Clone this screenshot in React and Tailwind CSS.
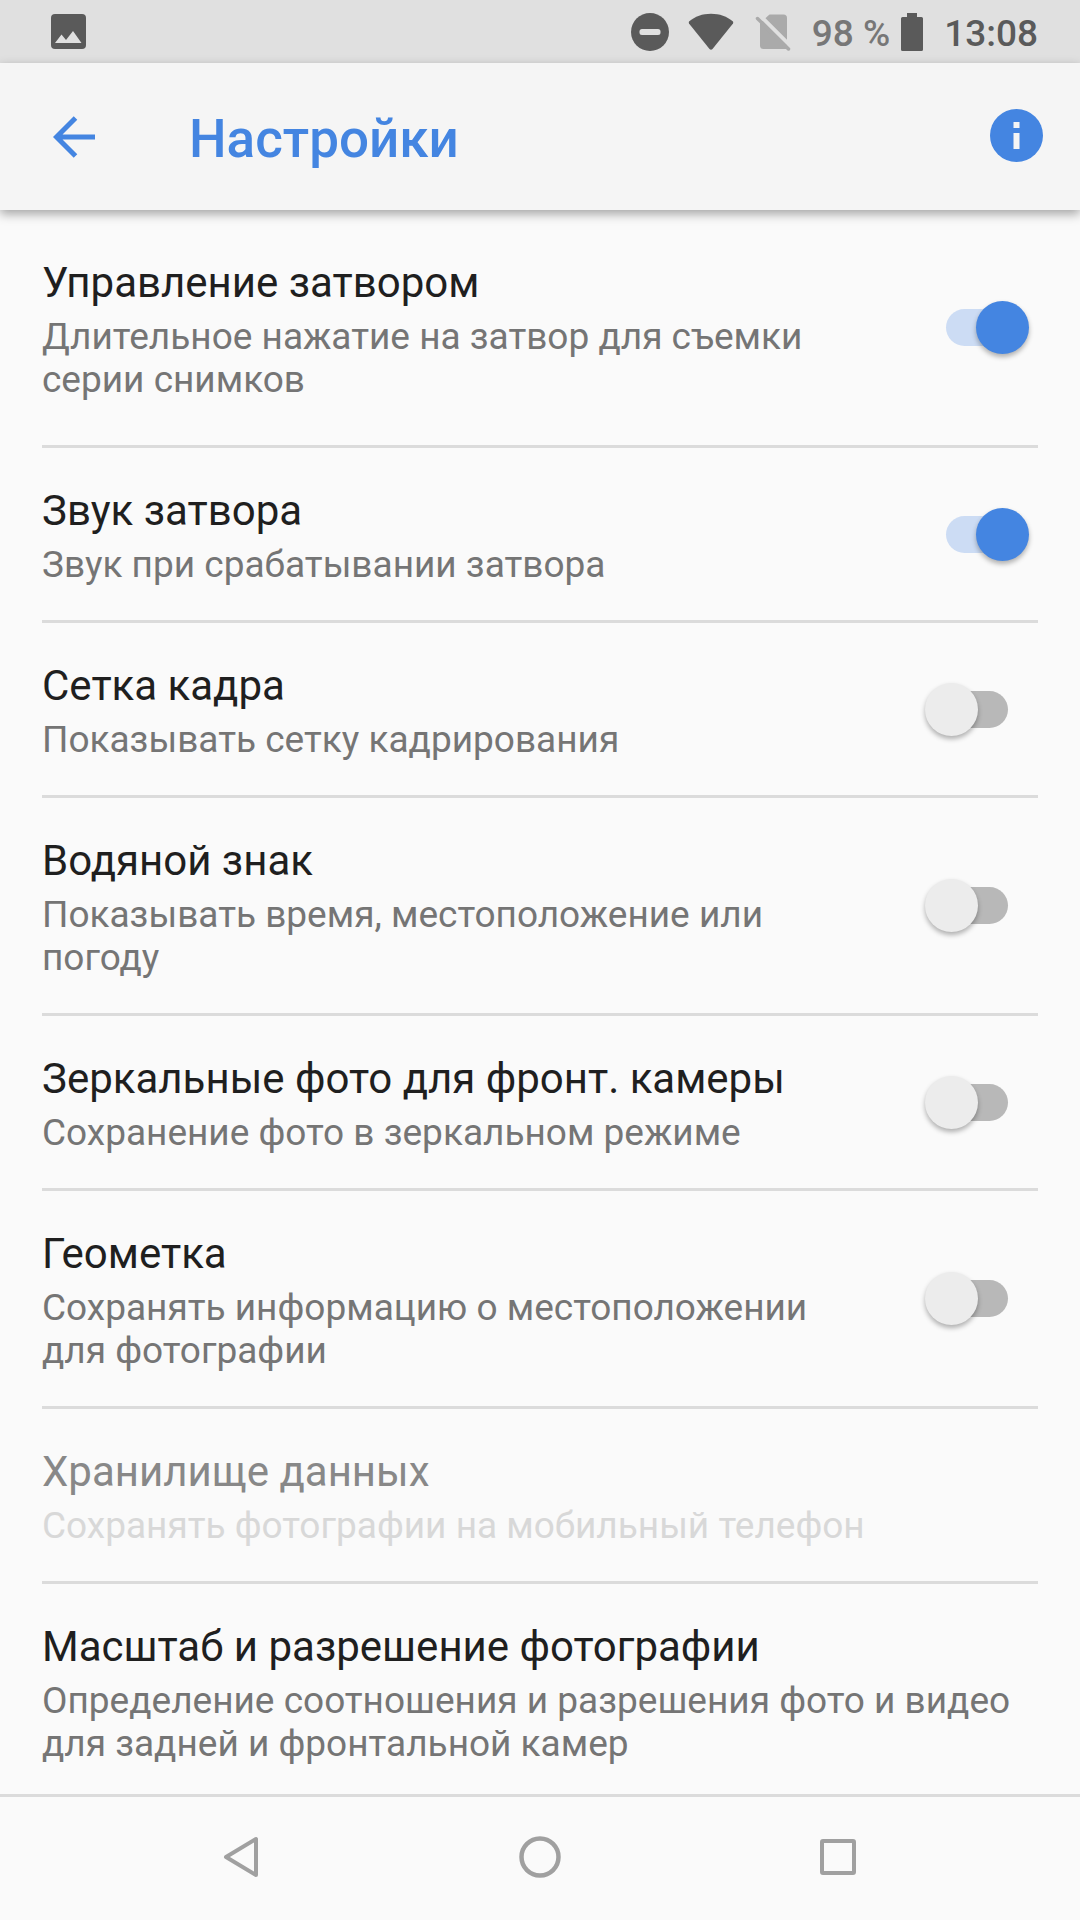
import { useState } from "react";

const settings = [
  {
    id: "shutterControl",
    title: "Управление затвором",
    summary: "Длительное нажатие на затвор для съемки серии снимков",
    type: "switch",
  },
  {
    id: "shutterSound",
    title: "Звук затвора",
    summary: "Звук при срабатывании затвора",
    type: "switch",
  },
  {
    id: "grid",
    title: "Сетка кадра",
    summary: "Показывать сетку кадрирования",
    type: "switch",
  },
  {
    id: "watermark",
    title: "Водяной знак",
    summary: "Показывать время, местоположение или погоду",
    type: "switch",
  },
  {
    id: "mirror",
    title: "Зеркальные фото для фронт. камеры",
    summary: "Сохранение фото в зеркальном режиме",
    type: "switch",
  },
  {
    id: "geotag",
    title: "Геометка",
    summary: "Сохранять информацию о местоположении для фотографии",
    type: "switch",
  },
  {
    id: "storage",
    title: "Хранилище данных",
    summary: "Сохранять фотографии на мобильный телефон",
    type: "link",
    disabled: true,
  },
  {
    id: "resolution",
    title: "Масштаб и разрешение фотографии",
    summary:
      "Определение соотношения и разрешения фото и видео для задней и фронтальной камер",
    type: "link",
  },
];

const StatusBar = () => (
  <div className="flex h-[63px] items-center justify-between bg-[#e0e0e0] pr-[42px] pl-[51px] text-[#5a5a5a]">
    <svg width="35" height="35" viewBox="0 0 35 35" aria-hidden="true">
      <rect width="35" height="35" rx="4" fill="currentColor" />
      <path d="M4 29 10.5 20.5 15 26 22 17 30.5 29Z" fill="#e0e0e0" />
    </svg>
    <div className="flex items-center">
      <svg width="38" height="38" viewBox="0 0 38 38" aria-hidden="true">
        <circle cx="19" cy="19" r="19" fill="currentColor" />
        <rect x="8.5" y="16" width="21" height="6" rx="2.5" fill="#e0e0e0" />
      </svg>
      <svg
        className="ml-[19px]"
        width="46"
        height="38"
        viewBox="0 0 46 38"
        aria-hidden="true"
      >
        <path
          d="M1 8.5C7 3.5 14.5 .8 23 .8S39 3.5 45 8.5Q45.5 9.5 45 10.5L24.5 36Q23 37.5 21.5 36L1 10.5Q.5 9.5 1 8.5Z"
          fill="currentColor"
        />
      </svg>
      <svg
        className="ml-[21px]"
        width="36"
        height="38"
        viewBox="0 0 36 38"
        aria-hidden="true"
      >
        <path
          d="M14.5 1.5H28.5Q32 1.5 32 5V36H8.5Q5 36 5 32.5V10Z"
          fill="#aaaaaa"
        />
        <path d="M4 1.5 36 33.5" stroke="#e0e0e0" strokeWidth="4" />
        <path
          d="M2.5 5.5 33.5 36"
          stroke="#aaaaaa"
          strokeWidth="3.5"
          strokeLinecap="round"
        />
      </svg>
      <span className="ml-[21px] pt-1 text-[37px] leading-[43px] font-medium text-[#777777]">
        98 %
      </span>
      <svg
        className="ml-[11px]"
        width="22"
        height="38"
        viewBox="0 0 22 38"
        aria-hidden="true"
      >
        <path
          d="M6 0H16V4H20.5Q22 4 22 5.5V36.5Q22 38 20.5 38H1.5Q0 38 0 36.5V5.5Q0 4 1.5 4H6Z"
          fill="currentColor"
        />
      </svg>
      <span className="ml-[21px] pt-1 text-[37px] leading-[43px] font-medium">
        13:08
      </span>
    </div>
  </div>
);

const Header = () => (
  <header className="relative z-10 flex h-[147px] items-center bg-[#f5f5f5] pr-[37px] pl-[53px] text-[#4485e1] shadow-[0_4px_10px_rgba(0,0,0,0.35)]">
    <button type="button" aria-label="Назад">
      <svg width="42" height="42" viewBox="0 0 42 42" aria-hidden="true">
        <path
          d="M22.5 2 3.5 21 22.5 40M3.5 21H42"
          fill="none"
          stroke="currentColor"
          strokeWidth="5"
        />
      </svg>
    </button>
    <h1 className="ml-[94px] flex-1 pt-1 text-[53px] leading-[62px] font-medium">
      Настройки
    </h1>
    <button type="button" aria-label="Информация" className="pb-0.5">
      <svg width="53" height="53" viewBox="0 0 53 53" aria-hidden="true">
        <circle cx="26.5" cy="26.5" r="26.5" fill="currentColor" />
        <path d="M23.5 13h6v6h-6zM23.5 24h6v16h-6z" fill="#f5f5f5" />
      </svg>
    </button>
  </header>
);

const SettingText = ({ title, summary, disabled }) => (
  <span className="block flex-1 pt-[38px] pb-[34px]">
    <span
      className={`block text-[42px] leading-[49px] ${
        disabled ? "text-[#888888]" : "text-[#1f1f1f]"
      }`}
    >
      {title}
    </span>
    <span
      className={`mt-2 block text-[37px] leading-[43px] ${
        disabled ? "text-[#d8d8d8]" : "text-[#757575]"
      }`}
    >
      {summary}
    </span>
  </span>
);

const Switch = ({ checked, onChange }) => (
  <input
    type="checkbox"
    role="switch"
    checked={checked}
    onChange={onChange}
    className="relative mr-[9px] h-[53px] w-[104px] shrink-0 appearance-none before:absolute before:top-2 before:left-[21px] before:h-[37px] before:w-[62px] before:rounded-full before:bg-[#b8b8b8] after:absolute after:top-0 after:left-0 after:size-[53px] after:rounded-full after:bg-[#ececec] after:shadow-[0_3px_5px_rgba(0,0,0,0.3)] checked:before:bg-[#ccdcf4] checked:after:left-[51px] checked:after:bg-[#4485e1]"
  />
);

const NavBar = () => (
  <nav className="flex h-[126px] items-center justify-center gap-[198px] border-t-[3px] border-[#dbdbdb] pb-1 text-[#a0a0a0]">
    <button
      type="button"
      aria-label="Назад"
      className="flex w-[100px] justify-center"
    >
      <svg width="38" height="42" viewBox="0 0 38 42" aria-hidden="true">
        <path
          d="M33 3V39L3 21Z"
          fill="none"
          stroke="currentColor"
          strokeWidth="4"
          strokeLinejoin="round"
        />
      </svg>
    </button>
    <button
      type="button"
      aria-label="Домой"
      className="flex w-[100px] justify-center"
    >
      <svg width="42" height="42" viewBox="0 0 42 42" aria-hidden="true">
        <circle
          cx="21"
          cy="21"
          r="18.5"
          fill="none"
          stroke="currentColor"
          strokeWidth="4.5"
        />
      </svg>
    </button>
    <button
      type="button"
      aria-label="Недавние"
      className="flex w-[100px] justify-center"
    >
      <svg width="36" height="36" viewBox="0 0 36 36" aria-hidden="true">
        <rect
          x="2"
          y="2"
          width="32"
          height="32"
          rx="1"
          fill="none"
          stroke="currentColor"
          strokeWidth="4"
        />
      </svg>
    </button>
  </nav>
);

const App = () => {
  const [enabled, setEnabled] = useState({
    shutterControl: true,
    shutterSound: true,
  });

  const toggleSetting = (id) => {
    setEnabled((prev) => ({ ...prev, [id]: !prev[id] }));
  };

  return (
    <div className="flex min-h-screen flex-col bg-[#fafafa] font-[Roboto,sans-serif]">
      <StatusBar />
      <Header />
      <main className="flex-1 px-[42px]">
        <ul className="divide-y-[3px] divide-[#dbdbdb]">
          {settings.map((item) => (
            <li key={item.id} className="first:py-[10px] last:-mb-[5px]">
              {item.type === "switch" ? (
                <label className="flex items-center gap-16">
                  <SettingText title={item.title} summary={item.summary} />
                  <Switch
                    checked={!!enabled[item.id]}
                    onChange={() => toggleSetting(item.id)}
                  />
                </label>
              ) : (
                <button
                  type="button"
                  disabled={item.disabled}
                  className="flex w-full text-left"
                >
                  <SettingText
                    title={item.title}
                    summary={item.summary}
                    disabled={item.disabled}
                  />
                </button>
              )}
            </li>
          ))}
        </ul>
      </main>
      <NavBar />
    </div>
  );
};

export default App;
